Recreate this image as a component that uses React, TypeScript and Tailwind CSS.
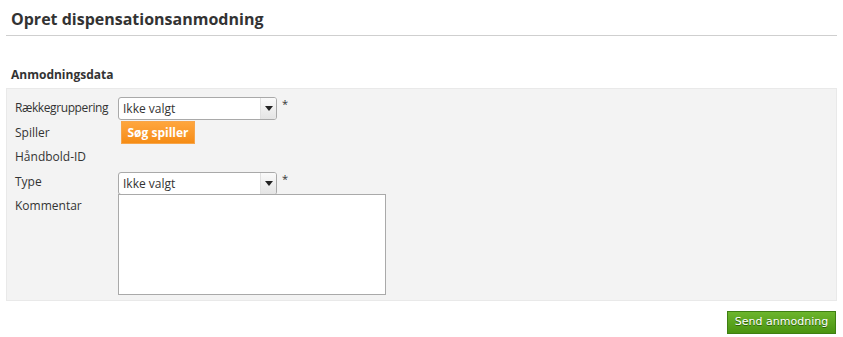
import { useState } from "react"

const font = { fontFamily: '"Open Sans", "Noto Sans", sans-serif' }

function Select({ value }: { value: string }) {
  return (
    <div className="flex h-[23px] w-[159px] items-stretch overflow-hidden rounded-[3px] border border-[#a9a9a9] bg-white">
      <div className="flex flex-1 items-center pl-[4px] text-[12px] text-[#333]">{value}</div>
      <div className="flex w-[16px] items-center justify-center border-l border-[#e0e0e0] bg-gradient-to-b from-[#fafafa] to-[#e4e4e4]">
        <svg width="8" height="5" viewBox="0 0 8 5">
          <path d="M0 0h8L4 5z" fill="#222" />
        </svg>
      </div>
    </div>
  )
}

export default function App() {
  const [kommentar, setKommentar] = useState("")

  return (
    <div className="min-h-[337px] w-[843px] bg-white px-[6px] text-[#333]" style={font}>
      <div className="border-b border-[#cfcfcf] pb-[5px] pl-[5px] pt-[8px]">
        <h1 className="text-[16px] font-bold leading-[22px] text-[#333]">Opret dispensationsanmodning</h1>
      </div>

      <h2 className="pl-[5px] pt-[30px] pb-[5px] text-[12px] font-bold leading-[17px]">Anmodningsdata</h2>

      <div className="border border-[#e9e9e9] bg-[#f3f3f3] pl-[8px] pt-[8px] pb-[5px]">
        <div className="grid grid-cols-[103px_1fr] items-start text-[12px]">
          <label className="pt-[2px] leading-[18px] tracking-[-0.4px]">Rækkegruppering</label>
          <div className="flex items-start gap-[5px]">
            <Select value="Ikke valgt" />
            <span className="text-[11px] leading-[14px]">*</span>
          </div>

          <label className="pt-[4px] leading-[18px]">Spiller</label>
          <div className="pt-[1px] pl-[3px]">
            <button className="h-[23px] w-[74px] border border-[#f7a54a] bg-gradient-to-b from-[#ffa63c] to-[#f58c14] text-[12px] font-bold text-white">
              Søg spiller
            </button>
          </div>

          <label className="pt-[4px] leading-[18px]">Håndbold-ID</label>
          <div className="h-[28px]" />

          <label className="pt-[1px] leading-[18px]">Type</label>
          <div className="mb-[-1px] flex h-[23px] items-start gap-[5px]">
            <Select value="Ikke valgt" />
            <span className="text-[11px] leading-[14px]">*</span>
          </div>

          <label className="pt-[3px] leading-[18px]">Kommentar</label>
          <div>
            <textarea
              value={kommentar}
              onChange={(e) => setKommentar(e.target.value)}
              className="block h-[101px] w-[268px] resize-none border border-[#a9a9a9] bg-white"
            />
          </div>
        </div>
      </div>

      <div className="flex justify-end pt-[10px] pr-[1px]">
        <button
          className="h-[23px] w-[109px] border border-[#3f7f12] bg-gradient-to-b from-[#6cb52c] to-[#4a940f] text-[11px] text-white [text-shadow:0_1px_0_#2e5e0a]"
          style={{ fontFamily: '"DejaVu Sans", Verdana, sans-serif' }}
        >
          Send anmodning
        </button>
      </div>
    </div>
  )
}
